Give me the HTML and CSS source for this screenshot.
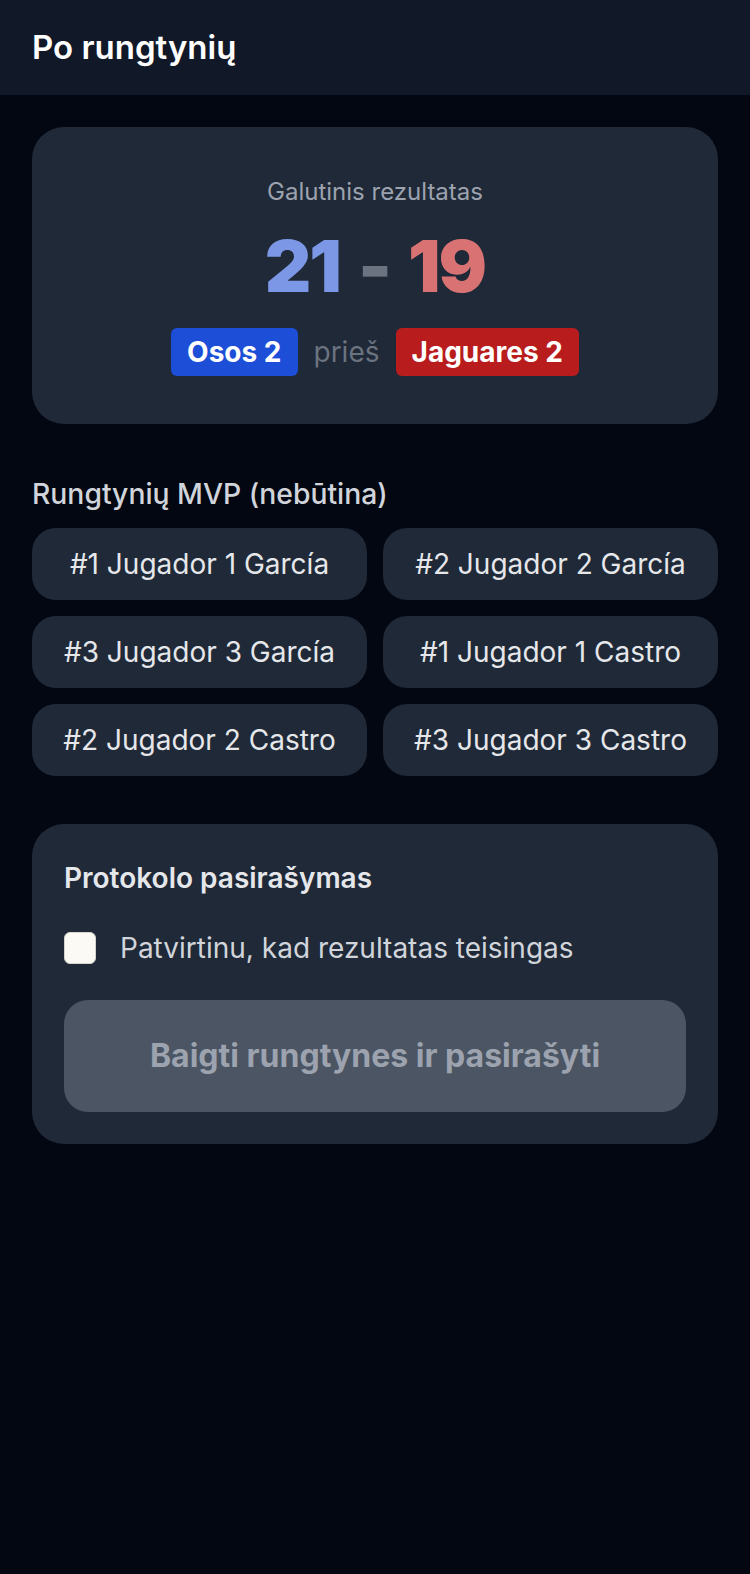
FILE: index.html
```html
<!DOCTYPE html>
<html lang="lt">
<head>
    <meta charset="UTF-8">
    <meta name="viewport" content="width=device-width, initial-scale=1.0">
    <title>Po rungtynių</title>
    <link rel="stylesheet" href="styles.css">
</head>
<body>
    <header class="top-bar">
        <h1>Po rungtynių</h1>
    </header>

    <main class="content">
        <section class="card result-card">
            <p class="result-label">Galutinis rezultatas</p>
            <div class="score">
                <span class="score-home">21</span>
                <span class="score-sep">-</span>
                <span class="score-away">19</span>
            </div>
            <div class="teams">
                <span class="team-badge home">Osos 2</span>
                <span class="vs">prieš</span>
                <span class="team-badge away">Jaguares 2</span>
            </div>
        </section>

        <section class="mvp">
            <h2 class="section-title">Rungtynių MVP (nebūtina)</h2>
            <div class="player-grid">
                <button class="player-btn">#1 Jugador 1 García</button>
                <button class="player-btn">#2 Jugador 2 García</button>
                <button class="player-btn">#3 Jugador 3 García</button>
                <button class="player-btn">#1 Jugador 1 Castro</button>
                <button class="player-btn">#2 Jugador 2 Castro</button>
                <button class="player-btn">#3 Jugador 3 Castro</button>
            </div>
        </section>

        <section class="card sign-card">
            <h2 class="sign-title">Protokolo pasirašymas</h2>
            <label class="confirm">
                <input type="checkbox" class="confirm-box">
                <span>Patvirtinu, kad rezultatas teisingas</span>
            </label>
            <button class="finish-btn" disabled>Baigti rungtynes ir pasirašyti</button>
        </section>
    </main>
</body>
</html>
```

FILE: styles.css
```css
* {
    box-sizing: border-box;
}
body {
    margin: 0;
    font-family: Inter, "Noto Sans", sans-serif;
    background-color: #030712;
    color: #f3f4f6;
}
.top-bar {
    background-color: #111827;
    padding: 24px 32px;
}
.top-bar h1 {
    margin: 0;
    font-size: 33px;
    line-height: 47px;
    font-weight: 600;
    color: #fff;
}
.content {
    padding: 32px;
}
.card {
    background-color: #1f2937;
    border-radius: 32px;
}
.result-card {
    padding: 49px 32px 48px;
    text-align: center;
}
.result-label {
    margin: 0;
    font-size: 24px;
    line-height: 32px;
    color: #9ca3af;
}
.score {
    display: flex;
    justify-content: center;
    align-items: center;
    gap: 18px;
    margin-top: 22px;
    font-size: 72px;
    line-height: 72px;
    font-weight: 900;
    letter-spacing: -2px;
}
.score-home {
    color: #7b97e6;
}
.score-sep {
    color: #6b7280;
}
.score-away {
    color: #d97373;
}
.teams {
    display: flex;
    justify-content: center;
    align-items: center;
    gap: 16px;
    margin-top: 26px;
}
.team-badge {
    padding: 4px 16px;
    border-radius: 6px;
    font-size: 28px;
    line-height: 40px;
    font-weight: 700;
    color: #fff;
}
.team-badge.home {
    background-color: #1d4ed8;
}
.team-badge.away {
    background-color: #b91c1c;
}
.vs {
    font-size: 28px;
    line-height: 40px;
    color: #6b7280;
}
.mvp {
    margin-top: 48px;
}
.section-title {
    margin: 0 0 12px;
    font-size: 28.3px;
    line-height: 44px;
    font-weight: 500;
    color: #d1d5db;
}
.player-grid {
    display: grid;
    grid-template-columns: 1fr 1fr;
    gap: 16px;
}
.player-btn {
    padding: 16px 8px;
    border: none;
    border-radius: 24px;
    background-color: #1f2937;
    font-family: inherit;
    font-size: 28px;
    line-height: 40px;
    color: #e5e7eb;
    cursor: pointer;
}
.sign-card {
    margin-top: 48px;
    padding: 32px;
}
.sign-title {
    margin: 0;
    font-size: 28px;
    line-height: 44px;
    font-weight: 600;
    color: #e5e7eb;
}
.confirm {
    display: flex;
    align-items: center;
    gap: 24px;
    margin-top: 28px;
    font-size: 28px;
    line-height: 40px;
    color: #d1d5db;
}
.confirm-box {
    appearance: none;
    margin: 0;
    width: 32px;
    height: 32px;
    border: 1px solid #d6d3cc;
    border-radius: 6px;
    background-color: #fbfaf5;
}
.finish-btn {
    display: block;
    width: 100%;
    margin-top: 32px;
    padding: 36px 16px;
    border: none;
    border-radius: 24px;
    background-color: #4b5563;
    font-family: inherit;
    font-size: 32px;
    line-height: 40px;
    font-weight: 700;
    color: #9ca3af;
}
```
